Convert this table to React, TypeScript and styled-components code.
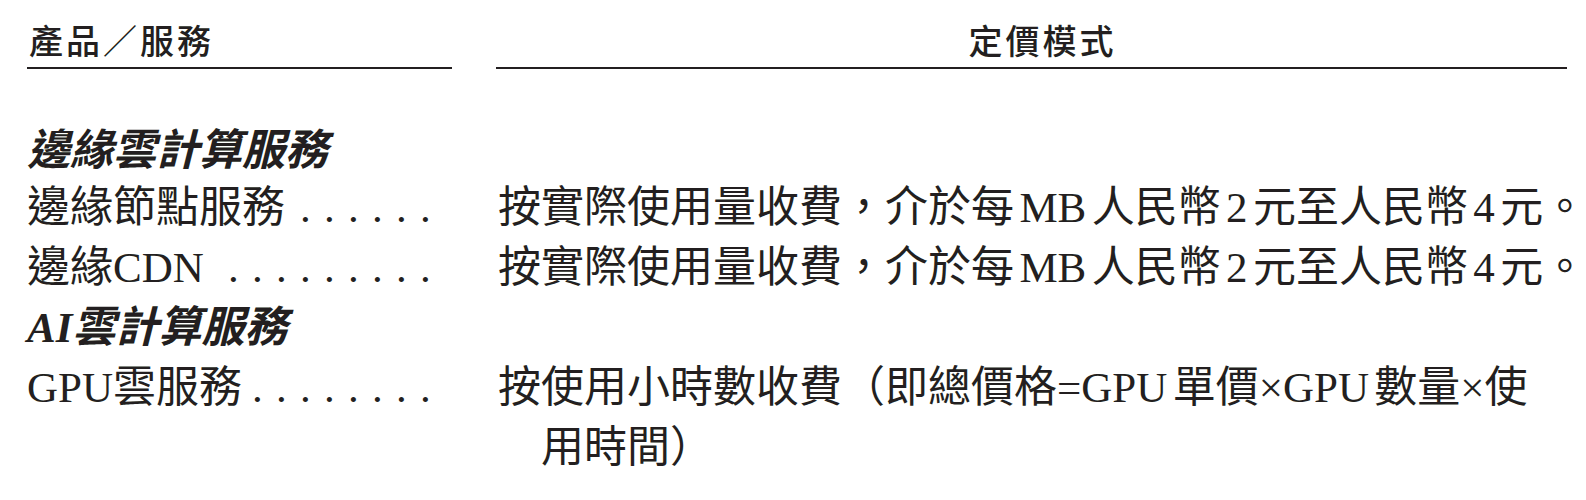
import React, { FC, ReactNode } from "react";
import styled, { createGlobalStyle } from "styled-components";

const GlobalStyle = createGlobalStyle`
  html, body {
    margin: 0;
    padding: 0;
    background: #fff;
  }
  body {
    font-family: "Liberation Serif", "Noto Sans CJK TC", serif;
    color: #231f20;
  }
`;

const Page = styled.div`
  padding: 20px 19px 0 27px;
`;

const Table = styled.div`
  display: grid;
  grid-template-columns: 425px minmax(0, 1fr);
  column-gap: 44px;
`;

const HeadCell = styled.div<{ $align?: "left" | "center" }>`
  font-family: "Noto Sans CJK TC", sans-serif;
  font-size: 34px;
  font-weight: 500;
  letter-spacing: 3px;
  line-height: 40px;
  text-align: ${(p) => p.$align ?? "left"};
  padding-left: ${(p) => (p.$align === "center" ? "22px" : "2px")};
  padding-bottom: 7px;
  border-bottom: 2px solid #231f20;
  margin-bottom: 49px;
`;

const SectionTitle = styled.div<{ $first?: boolean }>`
  grid-column: 1 / -1;
  font-family: "Liberation Serif", "Noto Sans CJK TC", serif;
  font-size: 43px;
  font-weight: 700;
  font-style: italic;
  line-height: 60px;
  margin-top: ${(p) => (p.$first ? "3px" : "0")};
  margin-bottom: ${(p) => (p.$first ? "-3px" : "0")};
`;

const ItemCell = styled.div`
  display: flex;
  justify-content: space-between;
  font-size: 43px;
  line-height: 60px;
  white-space: nowrap;
`;

const Leader = styled.span`
  letter-spacing: 13.25px;
  padding-right: 8px;
`;

const PriceCell = styled.div`
  font-size: 43px;
  line-height: 60px;
  white-space: nowrap;
  padding-left: 2px;
`;

const PriceLine = styled.div<{ $cont?: boolean }>`
  padding-left: ${(p) => (p.$cont ? "1em" : "0")};
`;

// small gap between ideographs and Latin letters / digits, as in the print
const Latin = styled.span<{ $lead: boolean; $trail: boolean }>`
  margin-left: ${(p) => (p.$lead ? "0.125em" : "0")};
  margin-right: ${(p) => (p.$trail ? "0.125em" : "0")};
`;

const HAN = /[\u3400-\u9fff]/;

const autospace = (text: string): ReactNode[] =>
  text
    .split(/([A-Za-z0-9]+)/)
    .filter((part) => part !== "")
    .map((part, i, all) => {
      if (!/^[A-Za-z0-9]+$/.test(part)) {
        return <React.Fragment key={i}>{part}</React.Fragment>;
      }
      const prev = all[i - 1];
      const next = all[i + 1];
      return (
        <Latin
          key={i}
          $lead={!!prev && HAN.test(prev[prev.length - 1])}
          $trail={!!next && HAN.test(next[0])}
        >
          {part}
        </Latin>
      );
    });

interface Item {
  name: string;
  dots: number;
  price: string[];
}

interface Section {
  title: string;
  items: Item[];
}

const sections: Section[] = [
  {
    title: "邊緣雲計算服務",
    items: [
      {
        name: "邊緣節點服務",
        dots: 6,
        price: ["按實際使用量收費，介於每MB人民幣2元至人民幣4元。"],
      },
      {
        name: "邊緣CDN",
        dots: 9,
        price: ["按實際使用量收費，介於每MB人民幣2元至人民幣4元。"],
      },
    ],
  },
  {
    title: "AI雲計算服務",
    items: [
      {
        name: "GPU雲服務",
        dots: 8,
        price: ["按使用小時數收費（即總價格=GPU單價×GPU數量×使", "用時間）"],
      },
    ],
  },
];

const App: FC = () => {
  return (
    <Page>
      <GlobalStyle />
      <Table>
        <HeadCell>產品／服務</HeadCell>
        <HeadCell $align="center">定價模式</HeadCell>
        {sections.map((section, s) => (
          <React.Fragment key={section.title}>
            <SectionTitle $first={s === 0}>{section.title}</SectionTitle>
            {section.items.map((item) => (
              <React.Fragment key={item.name}>
                <ItemCell>
                  <span>{item.name}</span>
                  <Leader>{".".repeat(item.dots)}</Leader>
                </ItemCell>
                <PriceCell>
                  {item.price.map((line, i) => (
                    <PriceLine key={i} $cont={i > 0}>
                      {autospace(line)}
                    </PriceLine>
                  ))}
                </PriceCell>
              </React.Fragment>
            ))}
          </React.Fragment>
        ))}
      </Table>
    </Page>
  );
};

export default App;
